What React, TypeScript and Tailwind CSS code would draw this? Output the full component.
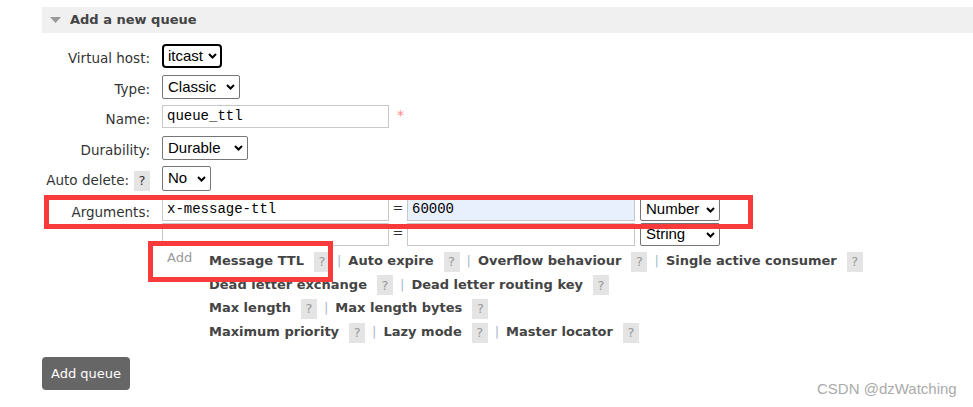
import React from "react";

const Chevron = ({ right }: { right: string }) => (
  <svg
    className={`pointer-events-none absolute top-1/2 -translate-y-1/2 ${right}`}
    width="9"
    height="6"
    viewBox="0 0 9 6"
  >
    <path d="M1 1l3.5 3.5L8 1" fill="none" stroke="#000" strokeWidth="2" />
  </svg>
);

function Select({
  value,
  width,
  focused,
}: {
  value: string;
  width: string;
  focused?: boolean;
}) {
  return (
    <div
      className={`relative flex h-full items-center bg-white text-[15px] text-black ${width} ${
        focused
          ? "rounded-[4px] border-2 border-black pl-[4px]"
          : "rounded-[2px] border border-[#767676] pl-[5px]"
      }`}
      style={{ fontFamily: '"Liberation Sans", Arial, sans-serif' }}
    >
      <span>{value}</span>
      <Chevron right={focused ? "right-[3px]" : "right-[4px]"} />
    </div>
  );
}

function TextInput({ value, width, filled }: { value?: string; width: string; filled?: boolean }) {
  return (
    <div
      className={`flex h-full items-center border border-[#c8c8c8] pl-[4px] text-[14px] leading-none text-black ${width} ${
        filled ? "bg-[#e8f0fe]" : "bg-white"
      }`}
      style={{ fontFamily: '"Liberation Mono", "Courier New", monospace' }}
    >
      <span className="-mt-[2px]">{value}</span>
    </div>
  );
}

const Help = ({ dark }: { dark?: boolean }) => (
  <span
    className={`inline-flex h-[20px] w-[16px] items-center justify-center bg-[#e4e4e4] text-[13px] ${
      dark ? "text-[#333]" : "text-[#999]"
    }`}
  >
    ?
  </span>
);

const Sep = () => <span className="mx-[7px] text-[13px] text-[#aab8cc]">|</span>;

function Row({
  label,
  help,
  top,
  height,
  children,
}: {
  label?: string;
  help?: boolean;
  top: string;
  height: string;
  children: React.ReactNode;
}) {
  return (
    <div className={`flex ${top}`}>
      <div className="flex w-[108px] justify-end pt-[6px] leading-[16px] text-[#333]">
        {label && <span className="whitespace-nowrap text-[13.5px]">{label}</span>}
        {help && (
          <span className="ml-[5px] -mt-[1px]">
            <Help dark />
          </span>
        )}
      </div>
      <div className={`ml-[12px] flex items-stretch ${height}`}>{children}</div>
    </div>
  );
}

function Link({ text, last }: { text: string; last?: boolean }) {
  return (
    <span className="inline-flex items-center">
      <span className="text-[13px] font-bold text-[#444]">{text}</span>
      <span className="ml-[10px]">
        <Help />
      </span>
      {!last && <Sep />}
    </span>
  );
}

export default function App() {
  return (
    <div
      className="relative h-[407px] w-[973px] overflow-hidden bg-white pl-[42px]"
      style={{ fontFamily: '"DejaVu Sans", Verdana, sans-serif' }}
    >
      <div className="mt-[7px] flex h-[26px] items-center bg-[#f0f0f0]">
        <svg className="ml-[8px]" width="11" height="7" viewBox="0 0 11 7">
          <path d="M0 0h11L5.5 6z" fill="#999" />
        </svg>
        <span className="ml-[9px] text-[13px] font-bold text-[#444]">Add a new queue</span>
      </div>

      <Row label="Virtual host:" top="mt-[11px]" height="h-[24px]">
        <Select value="itcast" width="w-[60px]" focused />
      </Row>
      <Row label="Type:" top="mt-[7px]" height="h-[24px]">
        <Select value="Classic" width="w-[78px]" />
      </Row>
      <Row label="Name:" top="mt-[6px]" height="h-[23px]">
        <TextInput value="queue_ttl" width="w-[227px]" />
        <span className="ml-[8px] text-[14px] leading-[20px] text-[#f88]">*</span>
      </Row>
      <Row label="Durability:" top="mt-[8px]" height="h-[24px]">
        <Select value="Durable" width="w-[86px]" />
      </Row>
      <Row label="Auto delete:" help top="mt-[6px]" height="h-[25px]">
        <Select value="No" width="w-[49px]" />
      </Row>
      <Row label="Arguments:" top="mt-[7px]" height="h-[23px]">
        <TextInput value="x-message-ttl" width="w-[227px]" />
        <span className="w-[18px] text-center text-[13px] leading-[20px] text-[#333]">=</span>
        <TextInput value="60000" width="w-[228px]" filled />
        <div className="ml-[5px] h-[23px]">
          <Select value="Number" width="w-[80px]" />
        </div>
      </Row>
      <Row top="mt-[2px]" height="h-[23px]">
        <TextInput width="w-[227px]" />
        <span className="w-[18px] text-center text-[13px] leading-[20px] text-[#333]">=</span>
        <TextInput width="w-[228px]" />
        <div className="ml-[5px] h-[23px]">
          <Select value="String" width="w-[80px]" />
        </div>
      </Row>

      <div className="ml-[120px] mt-[3px] flex">
        <div className="w-[47px] pl-[5px] text-[13px] leading-[17px] text-[#999]">Add</div>
        <div className="flex flex-col">
          <div className="flex h-[24px] items-center">
            <Link text="Message TTL" />
            <Link text="Auto expire" />
            <Link text="Overflow behaviour" />
            <Link text="Single active consumer" last />
          </div>
          <div className="flex h-[23px] items-center">
            <Link text="Dead letter exchange" />
            <Link text="Dead letter routing key" last />
          </div>
          <div className="flex h-[24px] items-center">
            <Link text="Max length" />
            <Link text="Max length bytes" last />
          </div>
          <div className="flex h-[24px] items-center">
            <Link text="Maximum priority" />
            <Link text="Lazy mode" />
            <Link text="Master locator" last />
          </div>
        </div>
      </div>

      <button className="mt-[13px] h-[33px] w-[88px] rounded-[4px] bg-[#666] text-[13px] text-white">
        Add queue
      </button>

      {/* annotation boxes */}
      <div className="pointer-events-none absolute left-[44px] top-[195px] h-[34px] w-[709px] border-[5px] border-[#f83a3a]" />
      <div className="pointer-events-none absolute left-[148px] top-[241px] h-[41px] w-[185px] border-[5px] border-[#f83a3a]" />

      <div
        className="pointer-events-none absolute left-[817px] top-[378px] text-[15px] text-[#aaa]"
        style={{ fontFamily: '"Liberation Sans", Arial, sans-serif' }}
      >
        CSDN @dzWatching
      </div>
    </div>
  );
}
